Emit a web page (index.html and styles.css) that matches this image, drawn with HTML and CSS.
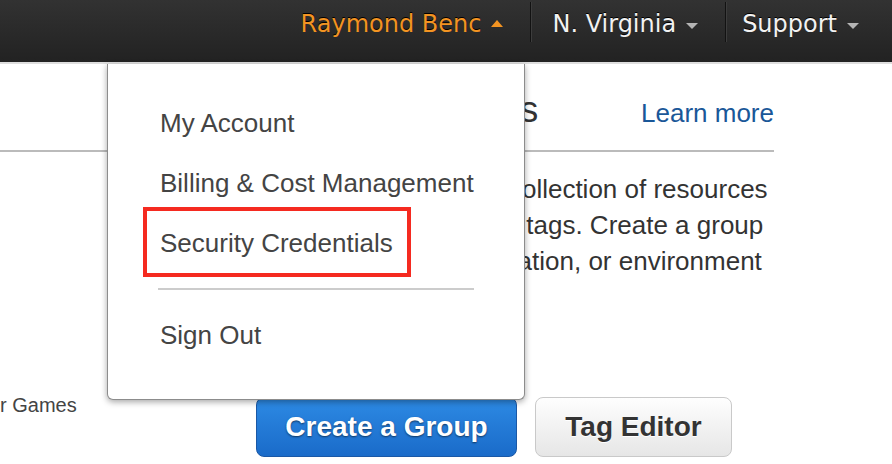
FILE: index.html
```html
<!DOCTYPE html>
<html lang="en">
<head>
<meta charset="utf-8">
<title>Resource Groups</title>
<link rel="stylesheet" href="styles.css">
</head>
<body>
<header class="topbar">
  <nav class="topnav">
    <div class="navitem navitem-user">Raymond Benc<span class="caret caret-up"></span></div>
    <div class="navitem">N. Virginia<span class="caret caret-down"></span></div>
    <div class="navitem navitem-last">Support<span class="caret caret-down"></span></div>
  </nav>
</header>

<main class="main">
  <div class="titlerow">
    <h1 class="title">Resource Groups</h1>
    <a class="learn" href="#">Learn more</a>
  </div>
  <div class="content">
    <p class="intro">A resource group is a collection of resources that share one or more tags. Create a group for each project, application, or environment</p>
  </div>
  <div class="bottomrow">
    <div class="side">r Games</div>
    <div class="buttons">
      <button class="btn btn-primary">Create a Group</button>
      <button class="btn btn-default">Tag Editor</button>
    </div>
  </div>
</main>

<div class="menu">
  <ul class="menulist">
    <li class="menuitem">My Account</li>
    <li class="menuitem">Billing &amp; Cost Management</li>
    <li class="menuitem menuitem-hl">Security Credentials<span class="highlight"></span></li>
    <li class="menudivider"></li>
    <li class="menuitem">Sign Out</li>
  </ul>
</div>
</body>
</html>
```

FILE: styles.css
```css
* { box-sizing: border-box; }
html, body { margin: 0; padding: 0; background: #fff; }
body {
  width: 892px;
  height: 464px;
  overflow: hidden;
  position: relative;
  font-family: "Liberation Sans", Arial, sans-serif;
}

.topbar {
  height: 64px;
  background: linear-gradient(#323232, #222222);
  border-bottom: 2px solid #dedede;
}
.topnav {
  display: flex;
  justify-content: flex-end;
}
.navitem {
  margin-top: 2px;
  height: 40px;
  padding: 4px 27px 0 21px;
  line-height: 36px;
  font-family: "DejaVu Sans", Verdana, sans-serif;
  font-size: 24px;
  color: #f2f2f2;
  text-shadow: 0 -1px 0 #000;
  display: flex;
  align-items: flex-start;
  border-right: 1px solid #121212;
  box-shadow: 1px 0 0 #3d3d3d;
}
.navitem-user { color: #f39422; }
.navitem-last { border-right: none; box-shadow: none; padding-right: 33px; padding-left: 16px; }

.caret {
  display: inline-block;
  width: 0;
  height: 0;
  margin-left: 10px;
  margin-top: 14px;
  border-left: 6px solid transparent;
  border-right: 6px solid transparent;
}
.caret-up { border-bottom: 7px solid #f39422; }
.caret-down { border-top: 6px solid #b4b4b4; margin-top: 17px; }

.main {
  width: 774px;
  padding-top: 24px;
}
.titlerow {
  display: flex;
  align-items: baseline;
  padding-left: 256px;
  padding-bottom: 15px;
  border-bottom: 2px solid #bbbbbb;
  line-height: 44px;
}
.title {
  margin: 0;
  font-size: 36px;
  font-weight: normal;
  color: #333;
}
.learn {
  margin-left: auto;
  font-size: 26px;
  color: #1a5798;
  text-decoration: none;
}
.content { padding-left: 256px; }
.intro {
  margin: 19px 0 0;
  font-size: 26px;
  line-height: 36px;
  color: #333;
}
.bottomrow {
  display: flex;
  margin-top: 118px;
}
.side {
  width: 256px;
  font-size: 20px;
  line-height: 16px;
  color: #444;
}
.buttons { display: flex; gap: 18px; }
.btn {
  height: 60px;
  border-radius: 8px;
  font-family: "Liberation Sans", Arial, sans-serif;
  font-weight: bold;
  font-size: 28px;
  padding: 0 0 1px;
}
.btn-primary {
  width: 261px;
  color: #fff;
  border: 1px solid #1a58a6;
  background: linear-gradient(#2d8ae4, #1a6bc9);
  text-shadow: 0 1px 2px rgba(0,0,0,.55);
}
.btn-default {
  width: 197px;
  color: #333;
  border: 1px solid #c9c9c9;
  background: linear-gradient(#fefefe, #e6e6e6);
  text-shadow: 0 1px 0 #fff;
}

.menu {
  position: absolute;
  left: 107px;
  top: 64px;
  width: 418px;
  background: #fff;
  border: 1px solid #8c8c8c;
  border-top: none;
  border-radius: 0 0 6px 6px;
  box-shadow: 0 2px 6px rgba(0,0,0,.35);
}
.menulist {
  list-style: none;
  margin: 0;
  padding: 29px 0 34px;
}
.menuitem {
  position: relative;
  height: 60px;
  line-height: 60px;
  padding-left: 52px;
  font-size: 26px;
  color: #444;
}
.menudivider {
  height: 2px;
  margin: 15px 50px 15px 50px;
  width: 316px;
  background: #cccccc;
}
.highlight {
  position: absolute;
  left: 35px;
  top: -6px;
  width: 268px;
  height: 70px;
  border: 4px solid #f52a20;
}
```
